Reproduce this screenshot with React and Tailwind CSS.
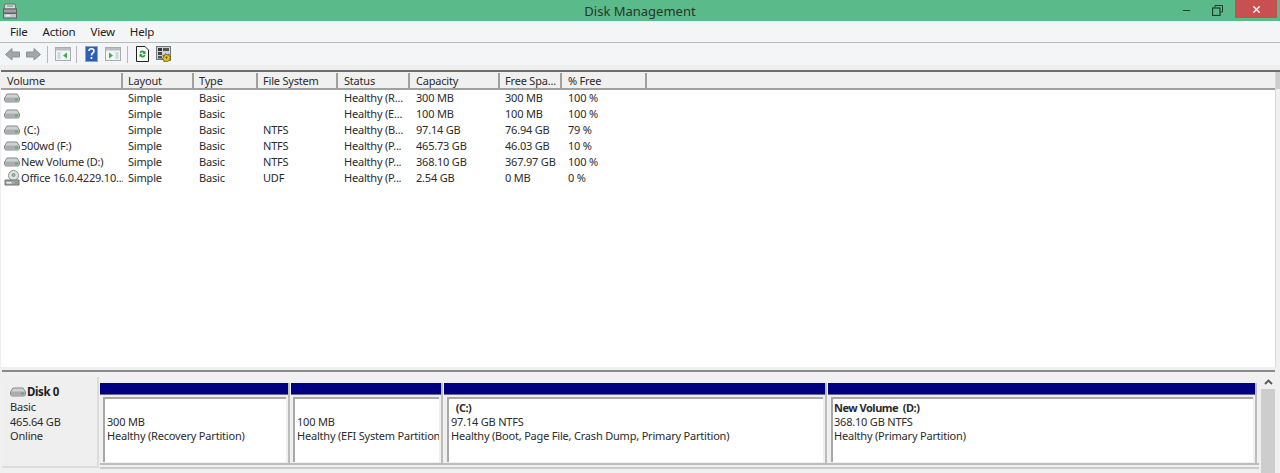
import { Minus, X } from 'lucide-react';

const font = { fontFamily: '"Noto Sans", sans-serif' };

const columns = [
  { name: 'Volume', width: 'w-[122px]', pad: 'pl-[6px]' },
  { name: 'Layout', width: 'w-[71px]', pad: 'pl-[5px]' },
  { name: 'Type', width: 'w-[64px]', pad: 'pl-[5px]' },
  { name: 'File System', width: 'w-[80px]', pad: 'pl-[5px]' },
  { name: 'Status', width: 'w-[72px]', pad: 'pl-[6px]' },
  { name: 'Capacity', width: 'w-[90px]', pad: 'pl-[6px]' },
  { name: 'Free Spa...', width: 'w-[62px]', pad: 'pl-[5px]' },
  { name: '% Free', width: 'w-[85px]', pad: 'pl-[6px]' },
];

const rows = [
  ['', 'Simple', 'Basic', '', 'Healthy (R...', '300 MB', '300 MB', '100 %'],
  ['', 'Simple', 'Basic', '', 'Healthy (E...', '100 MB', '100 MB', '100 %'],
  [' (C:)', 'Simple', 'Basic', 'NTFS', 'Healthy (B...', '97.14 GB', '76.94 GB', '79 %'],
  ['500wd (F:)', 'Simple', 'Basic', 'NTFS', 'Healthy (P...', '465.73 GB', '46.03 GB', '10 %'],
  ['New Volume (D:)', 'Simple', 'Basic', 'NTFS', 'Healthy (P...', '368.10 GB', '367.97 GB', '100 %'],
  ['Office 16.0.4229.10...', 'Simple', 'Basic', 'UDF', 'Healthy (P...', '2.54 GB', '0 MB', '0 %'],
];

const partitions = [
  { width: 'w-[190px]', box: 'ml-[3px] pl-[2px]', lines: ['', '300 MB', 'Healthy (Recovery Partition)'] },
  { width: 'w-[152px]', box: 'ml-[2px] pl-[2px]', lines: ['', '100 MB', 'Healthy (EFI System Partition)'] },
  { width: 'w-[383px]', box: 'ml-[3px] pl-[2px]', lines: ['  (C:)', '97.14 GB NTFS', 'Healthy (Boot, Page File, Crash Dump, Primary Partition)'], bold: true },
  { width: 'w-[429px]', box: 'ml-[3px] pl-px', lines: ['New Volume  (D:)', '368.10 GB NTFS', 'Healthy (Primary Partition)'], bold: true },
];

function DriveIcon() {
  return (
    <svg width="16" height="10" viewBox="0 0 16 10" className="shrink-0">
      <path d="M3 1h10l2.500 4v2.500l-1 1.500h-13l-1-1.500V5z" fill="#cfd2d3" stroke="#85898b" />
      <rect x="1" y="4.500" width="14" height="4" rx="1.500" fill="#a9adaf" />
      <rect x="11" y="5.500" width="3" height="2" fill="#57b35a" />
    </svg>
  );
}

function DiscIcon() {
  return (
    <svg width="16" height="16" viewBox="0 0 16 16" className="shrink-0">
      <circle cx="9.500" cy="5.500" r="5" fill="#dfe3e4" stroke="#8b9092" />
      <circle cx="9.500" cy="5" r="1.500" fill="#8cc596" stroke="#6f9c74" />
      <path d="M1 10h14v5H1z" fill="#a3a7a9" stroke="#6d7173" />
      <rect x="2.500" y="12" width="5" height="1.500" fill="#f2f2f2" />
      <rect x="11" y="12" width="2.500" height="1.500" fill="#57b35a" />
    </svg>
  );
}

function ToolbarIcons() {
  return (
    <div className="flex items-center h-[23px] pl-[5px]">
      <svg width="15" height="13" viewBox="0 0 15 13"><path d="M0.500 6.500l6.500-6v3.500h7.500v5H7v3z" fill="#a2a6a8" stroke="#8f9294" /></svg>
      <svg width="15" height="13" viewBox="0 0 15 13" className="ml-[6px]"><path d="M14.500 6.500l-6.500-6v3.500H0.500v5H8v3z" fill="#a2a6a8" stroke="#8f9294" /></svg>
      <div className="w-px h-[17px] bg-[#b5b7b9] ml-[6px]" />
      <svg width="16" height="14" viewBox="0 0 16 14" className="ml-[7px]">
        <rect x="0.500" y="0.500" width="15" height="13" fill="#f3f4f4" stroke="#a8acae" />
        <rect x="1" y="1" width="14" height="2.500" fill="#b9bec1" />
        <rect x="2.500" y="5" width="3" height="7" fill="#c3dbe4" />
        <path d="M12 5.500v6l-4-3z" fill="#3fae4a" />
      </svg>
      <div className="w-px h-[17px] bg-[#b5b7b9] ml-[5px]" />
      <svg width="13" height="16" viewBox="0 0 13 16" className="ml-[8px]">
        <rect width="13" height="16" fill="#2f5fb5" />
        <rect x="0.500" y="0.500" width="12" height="15" fill="none" stroke="#7fa3dd" />
        <path d="M4 5c0-3 5-3 5 0 0 2-2.500 2-2.500 4.500M6.500 11v2" fill="none" stroke="#fff" strokeWidth="1.600" />
      </svg>
      <svg width="16" height="14" viewBox="0 0 16 14" className="ml-[7px]">
        <rect x="0.500" y="0.500" width="15" height="13" fill="#f3f4f4" stroke="#a8acae" />
        <rect x="1" y="1" width="14" height="2.500" fill="#b9bec1" />
        <rect x="10.500" y="5" width="3" height="7" fill="#c3dbe4" />
        <path d="M4 5.500v6l4-3z" fill="#3fae4a" />
      </svg>
      <div className="w-px h-[17px] bg-[#b5b7b9] ml-[6px]" />
      <svg width="13" height="16" viewBox="0 0 13 16" className="ml-[8px]">
        <path d="M0.500 0.500h8.500l3.500 3.500v11.500h-12z" fill="#fff" stroke="#222" />
        <path d="M3.500 6.500a3 3 0 0 1 5-1l1-1v3.500h-3l1-1a2 2 0 0 0-3 0.500z" fill="#2c9c35" />
        <path d="M9.500 9.500a3 3 0 0 1-5 1l-1 1v-3.500h3l-1 1a2 2 0 0 0 3-0.500z" fill="#2c9c35" />
      </svg>
      <svg width="16" height="16" viewBox="0 0 16 16" className="ml-[7px]">
        <rect x="0.500" y="0.500" width="14" height="13" fill="#d0d2d3" stroke="#70777a" />
        <rect x="2" y="2" width="4" height="3" fill="#333" />
        <rect x="7" y="2" width="6" height="3" fill="#555" />
        <rect x="2" y="6" width="4" height="3" fill="#444" />
        <rect x="2" y="10" width="4" height="2.500" fill="#555" />
        <path d="M7 9l1.500 1 1-2.500 1.500 1.500 2-1 0 2 2 1-1.500 1.500 1 2-2 0-1 1.500-1.500-1-2 1 0-2-2-1 1.500-1.500z" fill="#e5c51d" stroke="#4d4410" strokeWidth="0.700" />
        <circle cx="10.500" cy="11.500" r="1" fill="#4d4410" />
      </svg>
    </div>
  );
}

export default function App() {
  return (
    <div className="w-[1280px] h-[473px] overflow-hidden flex flex-col bg-[#f0f0f0] text-[#2b2b2b] text-[11px] leading-4 tracking-[-0.2px]" style={font}>
      {/* title bar */}
      <div className="h-[21px] shrink-0 bg-[#5bba8a] flex items-center justify-between relative">
        <svg width="16" height="16" viewBox="0 0 16 16" className="ml-[2px]">
          <path d="M3 1h10l1 5H2z" fill="#d9dcdd" stroke="#6b7072" />
          <rect x="5" y="2" width="6" height="2" fill="#8fc79b" />
          <rect x="1.500" y="6" width="13" height="4" fill="#9ca0a2" stroke="#5f6365" />
          <rect x="1.500" y="10.500" width="13" height="4.500" fill="#c3c6c7" stroke="#5f6365" />
          <rect x="4" y="12" width="4" height="1.500" fill="#f2f2f2" />
        </svg>
        <div className="absolute inset-0 text-center text-[13px] leading-[22px] tracking-normal text-[#26352d]">Disk Management</div>
        <div className="flex items-center h-full relative">
          <Minus size={11} strokeWidth={2} className="text-[#1c2b24] mr-[20px]" />
          <svg width="11" height="11" viewBox="0 0 11 11" className="mr-[12px]">
            <path d="M3 2.500V0.500h7.500V7H8.500" fill="none" stroke="#1f3a2e" />
            <rect x="0.500" y="3" width="7.500" height="7.500" fill="none" stroke="#1f3a2e" strokeWidth="1.200" />
          </svg>
          <div className="w-[42px] h-[18px] mb-[3px] mr-[3px] bg-[#c75050] flex items-center justify-center">
            <X size={11} strokeWidth={3} className="text-white" />
          </div>
        </div>
      </div>

      {/* menu */}
      <div className="h-[22px] shrink-0 bg-[#f4f5f7] border-b border-[#b9babc] flex items-center pl-[10px] gap-[15px] text-[11.5px] text-[#222]">
        {['File', 'Action', 'View', 'Help'].map((m) => (
          <span key={m}>{m}</span>
        ))}
      </div>

      {/* toolbar */}
      <div className="h-[22px] shrink-0 bg-[#f4f5f7] flex items-center">
        <ToolbarIcons />
      </div>
      <div className="h-[5px] shrink-0 bg-[#eeeeee]" />

      {/* volume list */}
      <div className="h-[297px] shrink-0 flex border-t-2 border-[#6e6e6e] ml-[1px]">
        <div className="flex-1 min-w-0 bg-white overflow-hidden">
          <div className="flex h-[18px] pt-px bg-[#f0f0f0] border-b-2 border-[#a0a0a0]">
            {columns.map((c) => (
              <div key={c.name} className={`${c.width} ${c.pad} shrink-0 border-r-2 border-[#a0a0a0] whitespace-nowrap`}>{c.name}</div>
            ))}
            <div className="flex-1" />
          </div>
          {rows.map((r, i) => (
            <div key={i} className="flex h-[16px] items-center whitespace-nowrap">
              {r.map((cell, j) => (
                <div key={j} className={`${columns[j].width} ${j === 0 ? 'pl-[3px] flex items-center gap-px' : columns[j].pad} shrink-0 overflow-hidden`}>
                  {j === 0 && (i === 5 ? <DiscIcon /> : <DriveIcon />)}
                  {j === 0 ? <span className="whitespace-pre">{cell}</span> : cell}
                </div>
              ))}
            </div>
          ))}
        </div>
        <div className="w-[5px] shrink-0 flex flex-col border-l border-[#d8d8d8]">
          <div className="h-[17px] bg-[#cdcdcd]" />
          <div className="flex-1 bg-[#f0f0f0]" />
        </div>
      </div>

      {/* splitter */}
      <div className="h-[3px] shrink-0 bg-[#f0f0f0]" />
      <div className="h-[2px] shrink-0 bg-[#8a8a8a] ml-[2px] mr-[5px]" />

      {/* graphical view */}
      <div className="flex-1 flex min-h-0 pl-[2px]">
        <div className="w-[97px] shrink-0 h-[91px] bg-[#efefef] border-r-2 border-b-2 border-[#dcdcdc] mt-[5px] pl-[8px] pt-[7px]">
          <div className="flex items-center font-bold text-[11.5px] leading-[15px] tracking-[-0.4px] text-[#222]">
            <DriveIcon />
            <span className="ml-px">Disk 0</span>
          </div>
          <div className="leading-[14.500px] mt-px">Basic</div>
          <div className="leading-[14.500px]">465.64 GB</div>
          <div className="leading-[14.500px]">Online</div>
        </div>
        <div className="flex-1 min-w-0 flex flex-col pt-[11px] pl-[1px]">
          <div className="flex gap-px border-b-2 border-[#bdbdbd]">
            {partitions.map((p, i) => (
              <div key={i} className={`${p.width} shrink-0 border-r-2 border-[#bdbdbd] h-[80px]`}>
                <div className="h-[12px] bg-[#000080] border-b border-[#6a6a9a]" />
                <div className={`${p.box} h-[65px] mt-[2px] mr-[2px] bg-white border-l-2 border-t-2 border-[#a8a8a8] pt-[2px] leading-[14px] overflow-hidden whitespace-nowrap`}>
                  <div className={`h-[14px] whitespace-pre ${p.bold ? 'font-bold tracking-[-0.5px]' : ''}`}>{p.lines[0]}</div>
                  <div>{p.lines[1]}</div>
                  <div>{p.lines[2]}</div>
                </div>
              </div>
            ))}
          </div>
          <div className="h-[2px] mt-[2px] bg-[#cbcbcb]" />
        </div>
        <div className="w-[14px] shrink-0 flex flex-col items-center pt-[6px] ml-[2px] mr-[5px]">
          <svg width="9" height="6" viewBox="0 0 9 6" className="mt-px"><path d="M1 5l3.500-3.500L8 5" fill="none" stroke="#555" strokeWidth="1.800" /></svg>
          <div className="flex-1 w-full bg-[#cdcdcd] mt-[4px]" />
        </div>
      </div>
    </div>
  );
}
